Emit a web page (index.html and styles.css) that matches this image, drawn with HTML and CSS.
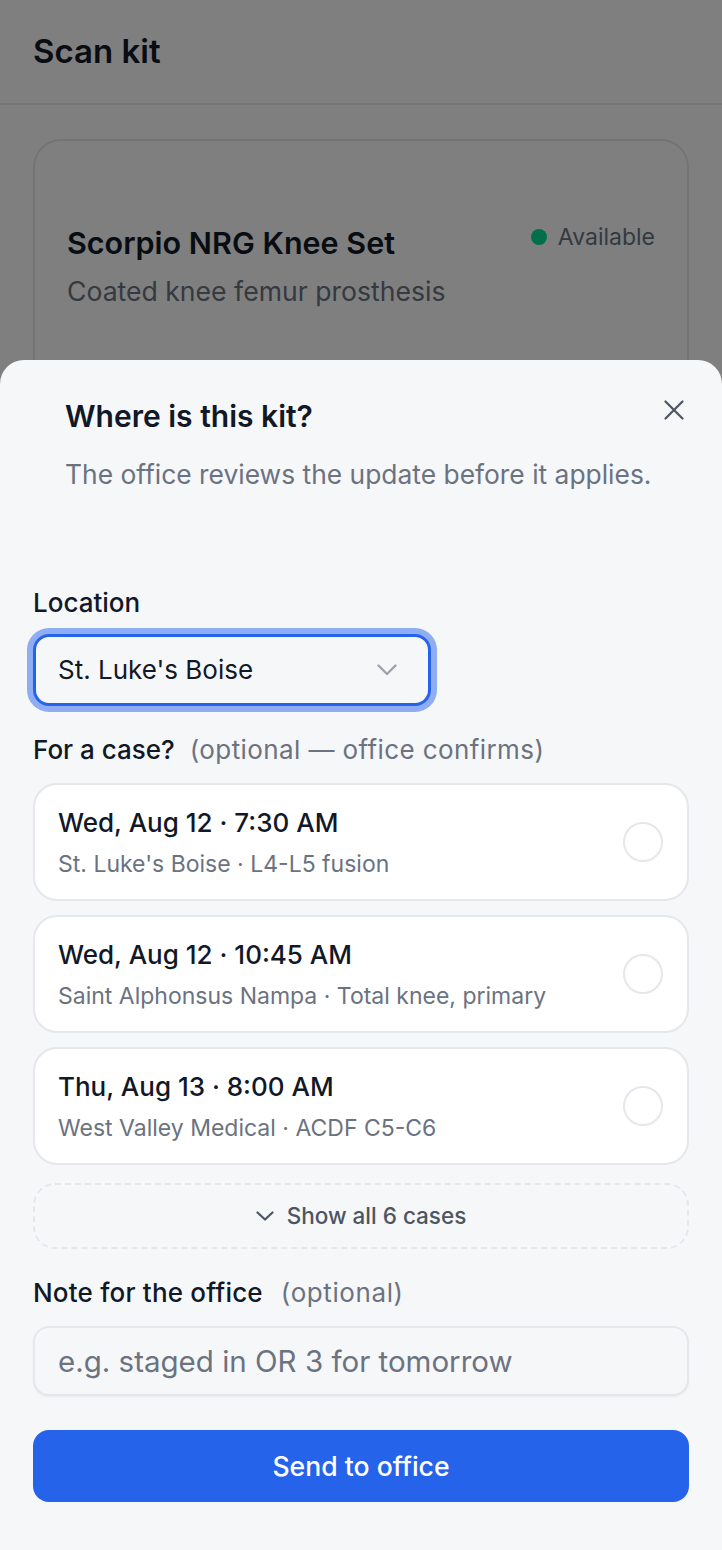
FILE: index.html
```html
<!DOCTYPE html>
<html lang="en">
<head>
<meta charset="utf-8">
<title>Scan kit</title>
<link rel="stylesheet" href="styles.css">
</head>
<body>
<div class="page">
  <header class="topbar">
    <h1 class="topbar-title">Scan kit</h1>
  </header>
  <main class="content">
    <section class="kit-card">
      <div class="kit-row">
        <div class="kit-name">Scorpio NRG Knee Set</div>
        <div class="status"><span class="status-dot"></span>Available</div>
      </div>
      <div class="kit-desc">Coated knee femur prosthesis</div>
    </section>
  </main>

  <div class="overlay"></div>

  <section class="sheet">
    <div class="sheet-head">
      <h2 class="sheet-title">Where is this kit?</h2>
      <p class="sheet-sub">The office reviews the update before it applies.</p>
    </div>
    <svg class="close" width="20" height="20" viewBox="0 0 20 20" aria-label="Close">
      <path d="M1.5 1.5 L18.5 18.5 M18.5 1.5 L1.5 18.5" stroke="#4b5563" stroke-width="2.2" stroke-linecap="round" fill="none"/>
    </svg>

    <div class="field-label label-location">Location</div>
    <div class="select">
      <span class="select-value">St. Luke's Boise</span>
      <svg class="select-chevron" width="20" height="12" viewBox="0 0 20 12">
        <path d="M1.5 1.5 L10 10 L18.5 1.5" stroke="#9ca3af" stroke-width="2.4" stroke-linecap="round" stroke-linejoin="round" fill="none"/>
      </svg>
    </div>

    <div class="field-label label-case">For a case?<span class="optional">(optional — office confirms)</span></div>
    <div class="cases">
      <div class="case">
        <div class="case-text">
          <div class="case-time">Wed, Aug 12 · 7:30 AM</div>
          <div class="case-where">St. Luke's Boise · L4-L5 fusion</div>
        </div>
        <span class="radio"></span>
      </div>
      <div class="case">
        <div class="case-text">
          <div class="case-time">Wed, Aug 12 · 10:45 AM</div>
          <div class="case-where">Saint Alphonsus Nampa · Total knee, primary</div>
        </div>
        <span class="radio"></span>
      </div>
      <div class="case">
        <div class="case-text">
          <div class="case-time">Thu, Aug 13 · 8:00 AM</div>
          <div class="case-where">West Valley Medical · ACDF C5-C6</div>
        </div>
        <span class="radio"></span>
      </div>
    </div>
    <div class="show-all">
      <svg width="18" height="10" viewBox="0 0 18 10">
        <path d="M1.5 1.5 L9 8.5 L16.5 1.5" stroke="#4b5563" stroke-width="2.2" stroke-linecap="round" stroke-linejoin="round" fill="none"/>
      </svg>
      <span>Show all 6 cases</span>
    </div>

    <div class="field-label label-note">Note for the office<span class="optional">(optional)</span></div>
    <input class="note-input" type="text" placeholder="e.g. staged in OR 3 for tomorrow">

    <button class="send" type="button">Send to office</button>
  </section>
</div>
</body>
</html>
```

FILE: styles.css
```css
* { box-sizing: border-box; }

body {
  margin: 0;
  font-family: Inter, "Noto Sans", sans-serif;
  background: #ffffff;
  color: #111827;
}

.page {
  position: relative;
  height: 1550px;
  overflow: hidden;
}

.topbar {
  padding: 29px 33px 30px;
  border-bottom: 2px solid #e5e7eb;
  background: #ffffff;
}

.topbar-title {
  margin: 0;
  font-size: 33px;
  line-height: 44px;
  font-weight: 600;
  color: #111827;
}

.content {
  padding: 34px 33px 0;
}

.kit-card {
  border: 2px solid #e5e7eb;
  border-radius: 28px;
  padding: 82px 32px 80px;
  height: 420px;
  background: #ffffff;
}

.kit-row {
  display: flex;
  justify-content: space-between;
  align-items: flex-start;
}

.kit-name {
  font-size: 30.5px;
  line-height: 40px;
  font-weight: 600;
  color: #111827;
}

.status {
  display: flex;
  align-items: center;
  gap: 11px;
  font-size: 23px;
  line-height: 28px;
  color: #6b7280;
}

.status-dot {
  width: 16px;
  height: 16px;
  border-radius: 50%;
  background: #00de94;
}

.kit-desc {
  margin-top: 10px;
  font-size: 26.6px;
  line-height: 36px;
  color: #6b7280;
}

.overlay {
  position: absolute;
  inset: 0;
  background: rgba(0, 0, 0, 0.5);
}

.sheet {
  position: absolute;
  left: 0;
  right: 0;
  top: 360px;
  bottom: 0;
  background: #f6f7f9;
  border-radius: 24px 24px 0 0;
  padding: 36px 33px 0;
}

.sheet-head {
  padding: 0 32px;
}

.sheet-title {
  margin: 0;
  font-size: 30px;
  line-height: 40px;
  font-weight: 600;
  color: #111827;
}

.sheet-sub {
  margin: 20px 0 0;
  font-size: 26.4px;
  line-height: 36px;
  color: #6b7280;
}

.close {
  position: absolute;
  top: 40px;
  right: 38px;
}

.field-label {
  font-size: 26px;
  line-height: 36px;
  font-weight: 500;
  color: #111827;
}

.optional {
  margin-left: 15px;
  font-weight: 400;
  letter-spacing: 0.4px;
  color: #6b7280;
}

.label-location { margin-top: 93px; }
.label-case { margin-top: 26px; }
.label-note { margin-top: 26px; letter-spacing: 0.2px; }
.label-note .optional { margin-left: 18px; letter-spacing: 0.6px; }

.select {
  margin-top: 13px;
  width: 398px;
  height: 72px;
  border: 3px solid #2563eb;
  border-radius: 16px;
  box-shadow: 0 0 0 6px rgba(37, 99, 235, 0.5);
  display: flex;
  align-items: center;
  justify-content: space-between;
  padding: 0 31px 0 22px;
  background: #f6f7f9;
}

.select-value {
  font-size: 26px;
  line-height: 36px;
  color: #111827;
}

.cases {
  margin-top: 15px;
  display: flex;
  flex-direction: column;
  gap: 14px;
}

.case {
  display: flex;
  align-items: center;
  justify-content: space-between;
  background: #ffffff;
  border: 2px solid #e5e7eb;
  border-radius: 24px;
  padding: 20px 24px 20px 23px;
}

.case-time {
  font-size: 26px;
  line-height: 36px;
  font-weight: 500;
  color: #111827;
}

.case-where {
  margin-top: 8px;
  font-size: 23px;
  line-height: 30px;
  color: #6b7280;
}

.radio {
  flex: none;
  width: 40px;
  height: 40px;
  border-radius: 50%;
  border: 2px solid #e5e7eb;
  background: #ffffff;
}

.show-all {
  margin-top: 18px;
  height: 66px;
  border: 2px dashed #e5e7eb;
  border-radius: 22px;
  display: flex;
  align-items: center;
  justify-content: center;
  gap: 13px;
  font-size: 22.5px;
  line-height: 30px;
  font-weight: 500;
  color: #4b5563;
}

.note-input {
  display: block;
  margin-top: 15px;
  width: 100%;
  height: 70px;
  border: 2px solid #e5e7eb;
  border-radius: 16px;
  background: #f6f7f9;
  box-shadow: 0 1px 2px rgba(0, 0, 0, 0.05);
  padding: 0 23px;
  font-family: Inter, "Noto Sans", sans-serif;
  font-size: 29.5px;
  color: #111827;
  outline: none;
}

.note-input::placeholder {
  color: #6b7280;
}

.send {
  display: block;
  margin-top: 34px;
  width: 100%;
  height: 72px;
  border: none;
  border-radius: 16px;
  background: #2563eb;
  color: #ffffff;
  font-family: Inter, "Noto Sans", sans-serif;
  font-size: 26.6px;
  font-weight: 500;
}
```
